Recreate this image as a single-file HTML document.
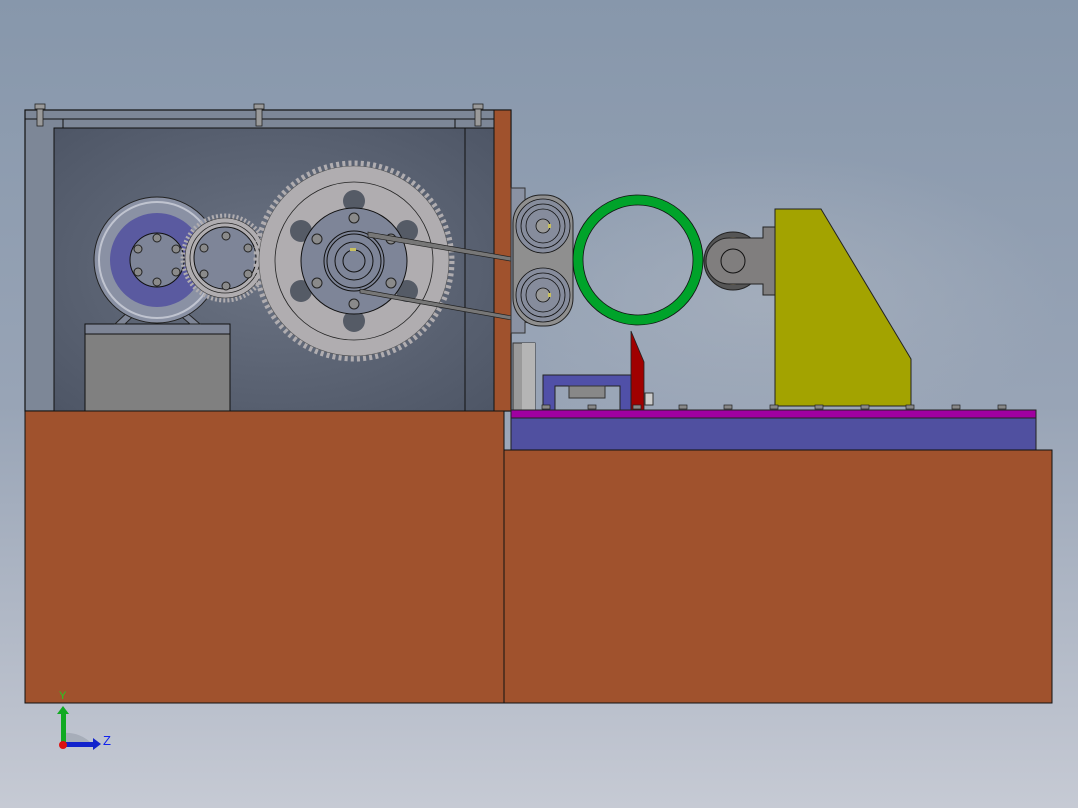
<!DOCTYPE html>
<html><head><meta charset="utf-8"><style>
html,body{margin:0;padding:0;width:1078px;height:808px;overflow:hidden}
svg{display:block}
</style></head><body>
<svg width="1078" height="808" viewBox="0 0 1078 808" xmlns="http://www.w3.org/2000/svg" font-family="Liberation Sans, sans-serif">
<defs>
<linearGradient id="bg" x1="0" y1="0" x2="0" y2="1">
<stop offset="0" stop-color="#8797ab"/><stop offset="0.5" stop-color="#98a4b6"/><stop offset="1" stop-color="#c6cad4"/>
</linearGradient>
<radialGradient id="panel" cx="0.5" cy="0.5" r="0.7">
<stop offset="0" stop-color="#6b7383"/><stop offset="1" stop-color="#4e5666"/>
</radialGradient>
<radialGradient id="shade" cx="0.5" cy="0.5" r="0.5">
<stop offset="0" stop-color="#a9b2bf" stop-opacity="0.7"/><stop offset="1" stop-color="#a9b2bf" stop-opacity="0"/>
</radialGradient>
</defs>
<rect width="1078" height="808" fill="url(#bg)"/>
<ellipse cx="760" cy="300" rx="300" ry="150" fill="url(#shade)"/>

<!-- left enclosure -->
<rect x="25" y="110" width="486" height="301" fill="#7d8797" stroke="#111" stroke-width="1.2"/>
<rect x="54" y="128" width="440" height="283" fill="url(#panel)" stroke="#111"/>
<line x1="25" y1="119" x2="494" y2="119" stroke="#111"/>
<line x1="63" y1="119" x2="63" y2="128" stroke="#111"/>
<line x1="465" y1="128" x2="465" y2="411" stroke="#111"/>
<line x1="455" y1="119" x2="455" y2="128" stroke="#111"/>
<rect x="494" y="110" width="17" height="301" fill="#a0522d" stroke="#111"/>
<g fill="#9a9a9a" stroke="#222" stroke-width="0.8">
<rect x="35" y="104" width="10" height="5"/><rect x="37" y="109" width="6" height="17"/>
<rect x="254" y="104" width="10" height="5"/><rect x="256" y="109" width="6" height="17"/>
<rect x="473" y="104" width="10" height="5"/><rect x="475" y="109" width="6" height="17"/>
</g>

<!-- motor -->
<rect x="85" y="334" width="145" height="77" fill="#808080" stroke="#111"/>
<rect x="85" y="324" width="145" height="10" fill="#7e8596" stroke="#111"/>
<polygon points="115,324 135,305 145,305 125,324" fill="#7e8596" stroke="#222"/>
<polygon points="200,324 178,305 168,305 190,324" fill="#7e8596" stroke="#222"/>
<circle cx="157" cy="260" r="63" fill="#8a91a4" stroke="#222"/>
<circle cx="157" cy="260" r="58" fill="none" stroke="#c0c4d0" stroke-width="2"/>
<circle cx="157" cy="260" r="47" fill="#5a5aa0"/>
<circle cx="157" cy="260" r="27" fill="#7e8598" stroke="#111"/>
<g fill="#8a8a8a" stroke="#222"><circle cx="157" cy="238" r="4"/><circle cx="157" cy="282" r="4"/><circle cx="138" cy="249" r="4"/><circle cx="176" cy="249" r="4"/><circle cx="138" cy="272" r="4"/><circle cx="176" cy="272" r="4"/></g>

<!-- small gear -->
<circle cx="225" cy="258" r="42" fill="none" stroke="#b0adb0" stroke-width="5" stroke-dasharray="2 2.1"/>
<circle cx="225" cy="258" r="40" fill="#b0adb0" stroke="#333" stroke-width="0.6"/>
<circle cx="225" cy="258" r="35" fill="none" stroke="#222" stroke-width="0.8"/>
<circle cx="225" cy="258" r="31" fill="#7e8598" stroke="#111"/>
<g fill="#8a8a8a" stroke="#222"><circle cx="226" cy="236" r="4"/><circle cx="226" cy="286" r="4"/><circle cx="204" cy="248" r="4"/><circle cx="248" cy="248" r="4"/><circle cx="204" cy="274" r="4"/><circle cx="248" cy="274" r="4"/></g>

<!-- big gear -->
<circle cx="354" cy="261" r="97" fill="none" stroke="#b0adb0" stroke-width="7" stroke-dasharray="3 3.1"/>
<circle cx="354" cy="261" r="95" fill="#b0adb0" stroke="#555" stroke-width="0.6"/>
<circle cx="354" cy="261" r="79" fill="none" stroke="#222" stroke-width="0.8"/>
<g fill="#555b66"><circle cx="354" cy="201" r="11"/><circle cx="354" cy="321" r="11"/><circle cx="301" cy="231" r="11"/><circle cx="407" cy="231" r="11"/><circle cx="301" cy="291" r="11"/><circle cx="407" cy="291" r="11"/></g>
<circle cx="354" cy="261" r="53" fill="#7e8598" stroke="#111"/>
<g fill="#8a8a8a" stroke="#222"><circle cx="354" cy="218" r="5"/><circle cx="354" cy="304" r="5"/><circle cx="317" cy="239" r="5"/><circle cx="391" cy="239" r="5"/><circle cx="317" cy="283" r="5"/><circle cx="391" cy="283" r="5"/></g>
<g fill="none" stroke="#111"><circle cx="354" cy="261" r="30"/><circle cx="354" cy="261" r="27"/><circle cx="354" cy="261" r="19"/><circle cx="354" cy="261" r="11"/></g>
<rect x="350" y="248" width="6" height="3" fill="#c8c060"/>

<!-- belts -->
<polygon points="368,232 368,237 540,266 540,262" fill="#777" stroke="#222" stroke-width="0.7"/>
<polygon points="360,289 360,293 540,325 540,321" fill="#777" stroke="#222" stroke-width="0.7"/>

<!-- pulleys -->
<rect x="511" y="188" width="14" height="145" fill="#8a92a3" stroke="#333"/>
<rect x="513" y="195" width="60" height="131" rx="28" fill="#8f8f8f" stroke="#222"/>
<g fill="#868c9c" stroke="#111" stroke-width="0.8">
<circle cx="543" cy="226" r="27"/><circle cx="543" cy="226" r="22" fill="none"/><circle cx="543" cy="226" r="17" fill="none"/><circle cx="543" cy="226" r="7" fill="#999"/>
<circle cx="543" cy="295" r="27"/><circle cx="543" cy="295" r="22" fill="none"/><circle cx="543" cy="295" r="17" fill="none"/><circle cx="543" cy="295" r="7" fill="#999"/>
</g>
<rect x="548" y="224" width="3" height="4" fill="#c8c060"/><rect x="548" y="293" width="3" height="4" fill="#c8c060"/>

<!-- cylinder -->
<rect x="513" y="343" width="22" height="67" fill="#9a9a9a" stroke="#333"/>
<rect x="522" y="343" width="13" height="67" fill="#b5b5b5"/>

<!-- green ring -->
<circle cx="638" cy="260" r="60" fill="none" stroke="#00a32a" stroke-width="10"/>
<circle cx="638" cy="260" r="65" fill="none" stroke="#111" stroke-width="0.8"/>
<circle cx="638" cy="260" r="55" fill="none" stroke="#111" stroke-width="0.8"/>

<!-- red blade -->
<polygon points="631,331 644,362 644,410 631,410" fill="#a00000" stroke="#222" stroke-width="0.8"/>
<rect x="645" y="393" width="8" height="12" fill="#ccc" stroke="#333"/>

<!-- blue bracket -->
<path d="M543,375 H631 V410 H620 V386 H555 V410 H543 Z" fill="#5050a8" stroke="#222"/>
<rect x="569" y="386" width="36" height="12" fill="#888" stroke="#333"/>

<!-- roller & bracket -->
<circle cx="733" cy="261" r="29" fill="#555" stroke="#222"/>
<circle cx="733" cy="261" r="23" fill="#8a8070" stroke="#c8b080" stroke-width="1.5"/>
<path d="M729,238 H763 V227 H776 V295 H763 V284 H729 A23 23 0 0 1 729,238 Z" fill="#807e7e" stroke="#222"/>
<circle cx="733" cy="261" r="12" fill="#807e7e" stroke="#111"/>
<polygon points="775,209 821,209 911,359 911,406 775,406" fill="#a3a300" stroke="#222"/>

<!-- plates -->
<rect x="511" y="418" width="525" height="32" fill="#5050a0" stroke="#222"/>
<rect x="511" y="410" width="525" height="8" fill="#a000a0" stroke="#222"/>
<g fill="#888" stroke="#222" stroke-width="0.7">
<rect x="542" y="405" width="8" height="4"/><rect x="588" y="405" width="8" height="4"/><rect x="633" y="405" width="8" height="4"/><rect x="679" y="405" width="8" height="4"/><rect x="724" y="405" width="8" height="4"/><rect x="770" y="405" width="8" height="4"/><rect x="815" y="405" width="8" height="4"/><rect x="861" y="405" width="8" height="4"/><rect x="906" y="405" width="8" height="4"/><rect x="952" y="405" width="8" height="4"/><rect x="998" y="405" width="8" height="4"/>
</g>

<!-- bases -->
<rect x="25" y="411" width="479" height="292" fill="#a0522d" stroke="#111"/>
<rect x="504" y="450" width="548" height="253" fill="#a0522d" stroke="#111"/>

<!-- triad -->
<path d="M63,733 A35 35 0 0 1 93,745 L63,745 Z" fill="#9098a4" opacity="0.5"/>
<rect x="61" y="712" width="5" height="33" fill="#11aa22"/>
<polygon points="57,714 63,706 69,714" fill="#11aa22"/>
<rect x="63" y="742" width="31" height="5" fill="#1122cc"/>
<polygon points="93,738 101,744 93,750" fill="#1122cc"/>
<circle cx="63" cy="745" r="4" fill="#dd1111"/>
<text x="59" y="699" font-size="11" fill="#22cc22">Y</text>
<text x="103" y="745" font-size="13" fill="#1122ee">Z</text>
</svg>
</body></html>
